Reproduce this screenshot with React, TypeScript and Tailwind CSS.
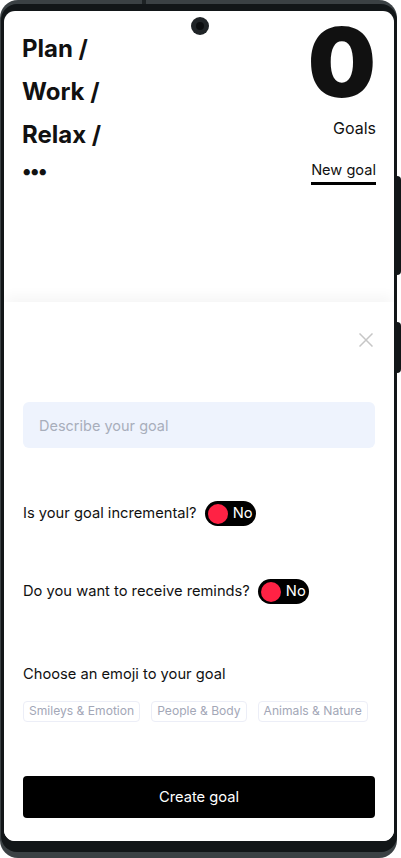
import { useState } from "react";

const categories = ["Smileys & Emotion", "People & Body", "Animals & Nature"];

function Toggle({ on }: { on: boolean }) {
  return (
    <span className="flex h-[25px] w-[51px] items-center rounded-full bg-black pl-[3px]">
      <span className="h-[20px] w-[20px] rounded-full bg-[#ff2244]" />
      <span className="ml-[5px] text-[14.7px] leading-none text-white">{on ? "Yes" : "No"}</span>
    </span>
  );
}

function CloseIcon() {
  return (
    <svg width="14" height="14" viewBox="0 0 14 14" fill="none" stroke="#c6c6c6" strokeWidth="1.5">
      <path d="M0.5 0.5 13.5 13.5M13.5 0.5 0.5 13.5" />
    </svg>
  );
}

export default function App() {
  const [goal, setGoal] = useState("");

  return (
    <div className="relative h-[858px] w-[401px] overflow-hidden bg-white font-['Inter',sans-serif] text-[#111]">
      {/* phone shell */}
      <div className="relative h-[858px] w-[397px] rounded-[18px] bg-[#3b4144] pb-[6px] pl-px pt-[4px]">
        <div className="h-full w-full rounded-[16px] bg-[#121618] px-[3px] pb-[11px] pt-[7px]">
          <div className="relative flex h-full flex-col overflow-hidden rounded-[11px] bg-white">
            {/* header */}
            <div className="flex flex-1 justify-between px-[18px] pt-[16px]">
              <div className="text-2xl font-bold leading-[43px]">
                <p>Plan /</p>
                <p>Work /</p>
                <p>Relax /</p>
                <p className="mt-[5px] text-xl leading-none tracking-[-1.5px]">•••</p>
              </div>
              <div className="flex flex-col items-end">
                <span className="mt-[-13px] text-[96px] font-black leading-[96px]">0</span>
                <span className="mt-[6px] text-base leading-6">Goals</span>
                <button className="mt-[18px] border-b-[3px] border-black text-[14.6px] leading-6">New goal</button>
              </div>
            </div>

            {/* sheet */}
            <div className="flex h-[539px] flex-col bg-white px-[19px] pb-[23px] pt-[31px] text-[14.7px] shadow-[0_-8px_12px_-2px_rgba(0,0,0,0.04)]">
              <div className="flex justify-end pr-[2px]">
                <CloseIcon />
              </div>
              <input
                value={goal}
                onChange={(e) => setGoal(e.target.value)}
                placeholder="Describe your goal"
                className="mt-[55px] h-[46px] w-full rounded-md bg-[#eef3fd] px-4 text-[14.5px] outline-none placeholder:text-[#a8aebb]"
              />
              <div className="mt-[53px] flex items-center gap-2">
                <span>Is your goal incremental?</span>
                <Toggle on={false} />
              </div>
              <div className="mt-[53px] flex items-center gap-2">
                <span>Do you want to receive reminds?</span>
                <Toggle on={false} />
              </div>
              <p className="mt-[58px] leading-6">Choose an emoji to your goal</p>
              <div className="mt-[15px] flex gap-[11px]">
                {categories.map((c) => (
                  <span
                    key={c}
                    className="flex h-[21px] items-center whitespace-nowrap rounded border border-[#eceef7] px-[5px] text-[12.1px] text-[#a3a7b7]"
                  >
                    {c}
                  </span>
                ))}
              </div>
              <button className="mt-[54px] h-[42px] w-full rounded bg-black text-white">Create goal</button>
            </div>

            {/* camera */}
            <span className="absolute left-[187px] top-[6px] flex h-[18px] w-[18px] items-center justify-center rounded-full bg-[#202427]">
              <span className="h-[8px] w-[8px] rounded-full bg-[#0b0d0f]" />
            </span>
          </div>
        </div>
        <span className="absolute left-[142px] top-0 h-[4px] w-[4px] bg-[#1d2224]" />
      </div>

      {/* side buttons */}
      <span className="absolute left-[396px] top-[176px] h-[99px] w-[5px] rounded-r-sm bg-[#121618]" />
      <span className="absolute left-[396px] top-[322px] h-[51px] w-[5px] rounded-r-sm bg-[#121618]" />
    </div>
  );
}
